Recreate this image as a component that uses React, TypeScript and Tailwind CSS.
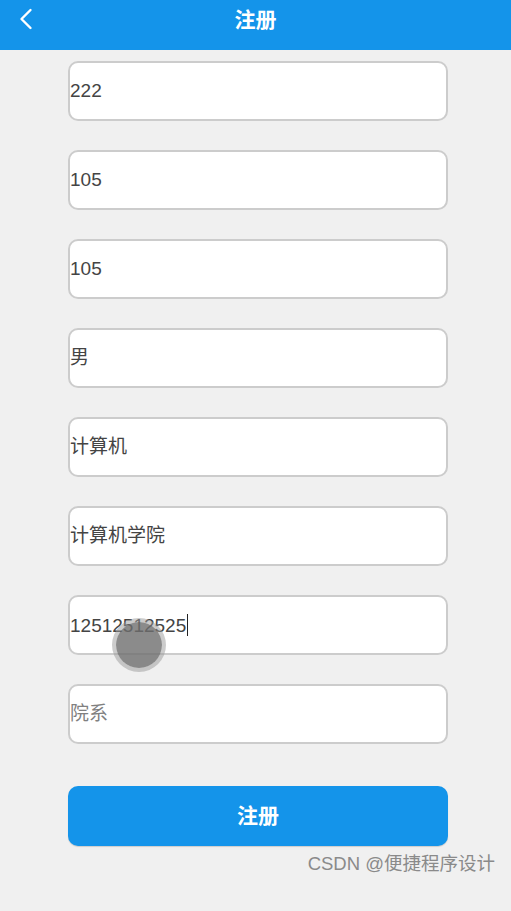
import { ChevronLeft } from 'lucide-react'

const FIELDS: { value: string; placeholder?: string; caret?: boolean }[] = [
  { value: '222' },
  { value: '105' },
  { value: '105' },
  { value: '男' },
  { value: '计算机' },
  { value: '计算机学院' },
  { value: '12512512525', caret: true },
  { value: '', placeholder: '院系' },
]

const FONT = "font-['Liberation_Sans','Noto_Sans_CJK_SC',sans-serif]"

export default function App() {
  return (
    <div className={`relative flex h-[911px] w-[511px] flex-col bg-[#f0f0f0] ${FONT}`}>
      <header className="relative flex h-[50px] shrink-0 items-center justify-center bg-[#1494ea]">
        <ChevronLeft className="absolute left-[8px] top-[1px] text-white" size={36} strokeWidth={1.6} />
        <span className="mb-[10px] text-[21px] font-bold text-white">注册</span>
      </header>

      <div className="flex flex-col gap-[29px] pl-[68px] pt-[11px]">
        {FIELDS.map((f, i) => (
          <div
            key={i}
            className="relative flex h-[60px] w-[380px] items-center rounded-[10px] border-2 border-[#cccccc] bg-white"
          >
            {f.value ? (
              <span className="text-[19px] text-[#444]">
                {f.value}
                {f.caret && <span className="ml-[1px] inline-block h-[22px] w-[1px] translate-y-[4px] bg-[#222]" />}
              </span>
            ) : (
              <span className="text-[19px] text-[#808080]">{f.placeholder}</span>
            )}
            {f.caret && (
              <span className="absolute left-[46px] top-[25px] h-[46px] w-[46px] rounded-full bg-[#6e6e6e]/80 ring-4 ring-[#9a9a9a]/50" />
            )}
          </div>
        ))}

        <button className="mt-[13px] h-[60px] w-[380px] rounded-[10px] bg-[#1494ea] text-[21px] font-bold text-white shadow-[0_1px_1px_rgba(0,0,0,0.15)]">
          注册
        </button>
      </div>

      <div className="mt-auto flex justify-end pb-[33px] pr-[16px] text-[18.5px] text-[#8a8a8a]">
        CSDN @便捷程序设计
      </div>
    </div>
  )
}
